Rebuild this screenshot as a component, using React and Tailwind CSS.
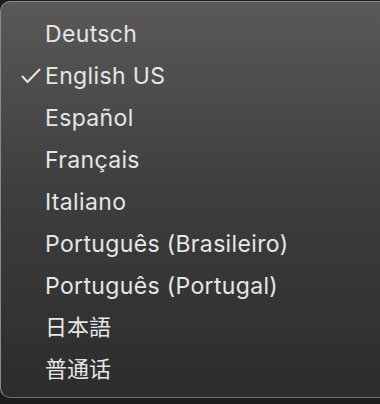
const languages = [
  { label: "Deutsch" },
  { label: "English US", checked: true },
  { label: "Español" },
  { label: "Français" },
  { label: "Italiano" },
  { label: "Português (Brasileiro)" },
  { label: "Português (Portugal)" },
  { label: "日本語", cjk: true },
  { label: "普通话", cjk: true },
];

function Check() {
  return (
    <svg width="20" height="16" viewBox="0 0 20 16" className="shrink-0">
      <path
        d="M1.5 8.5 L6.5 14 L18.5 1.5"
        fill="none"
        stroke="#e4e4e4"
        strokeWidth="2"
        strokeLinecap="round"
        strokeLinejoin="round"
      />
    </svg>
  );
}

export default function App() {
  return (
    <div className="w-[380px] h-[404px] overflow-hidden bg-[#1c1c1c] pt-px">
      {/* Menu panel */}
      <div
        className="w-[400px] h-[397px] rounded-l-[10px] border border-[#8a8a8a] border-b-[#6e6e6e] bg-gradient-to-b from-[#5a5958] via-[#3d3d3d] to-[#2c2c2c] pt-[11px]"
        style={{ fontFamily: "Inter, 'Noto Sans CJK SC', sans-serif" }}
      >
        {languages.map((lang) => (
          <div
            key={lang.label}
            className="h-[42px] flex items-center text-[23px] tracking-[0.35px] text-[#e6e6e6]"
          >
            <div className="w-[44px] flex justify-end pr-[4px]">
              {lang.checked && <Check />}
            </div>
            {lang.cjk ? (
              <span
                className="mb-[6px] text-[22px] tracking-normal"
                style={{ fontFamily: "'Noto Sans CJK SC', sans-serif" }}
              >
                {lang.label}
              </span>
            ) : (
              <span>{lang.label}</span>
            )}
          </div>
        ))}
      </div>
    </div>
  );
}
